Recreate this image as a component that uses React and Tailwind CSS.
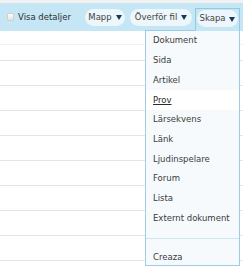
import { useState } from "react";

const items = [
  "Dokument",
  "Sida",
  "Artikel",
  "Prov",
  "Lärsekvens",
  "Länk",
  "Ljudinspelare",
  "Forum",
  "Lista",
  "Externt dokument",
];

function Caret() {
  return (
    <svg width="6" height="5" viewBox="0 0 6 5" className="ml-[4px] mt-[1px] shrink-0">
      <path d="M0 0 H6 L3 5 Z" fill="#17375e" />
    </svg>
  );
}

function Pill({ label, w }) {
  return (
    <div
      className={
        "flex items-center justify-center h-[17px] rounded-full bg-[#ecf6fb] text-[#444] whitespace-nowrap " +
        w
      }
    >
      {label}
      <Caret />
    </div>
  );
}

export default function App() {
  const [hover] = useState("Prov");

  return (
    <div
      className="relative w-[243px] h-[267px] overflow-hidden bg-white text-[8.5px] text-[#3b3b3b] whitespace-nowrap"
      style={{ fontFamily: '"DejaVu Sans", Verdana, sans-serif' }}
    >
      {/* top strip */}
      <div className="h-[3px] bg-[#f1f1f1]" />

      {/* toolbar */}
      <div className="flex items-center h-[28px] bg-[#c5e6f4] pl-[7px] pr-[3px]">
        <span className="w-[7px] h-[8px] shrink-0 rounded-[1px] border border-[#cfcfcf] bg-gradient-to-b from-white to-[#e2e2e2]" />
        <span className="ml-[4px] text-[#2e2e2e]">Visa detaljer</span>

        <div className="ml-auto flex items-center h-full">
          <Pill label="Mapp" w="w-[40px]" />
          <div className="ml-[5px]">
            <Pill label="Överför fil" w="w-[62px]" />
          </div>
          <div className="ml-[3px] self-end flex items-center h-[23px] px-[1px] pb-[3px] border border-b-0 border-[#93c8e2] bg-[#c5e6f4] relative z-10">
            <Pill label="Skapa" w="w-[41px]" />
          </div>
        </div>
      </div>

      {/* list rows */}
      <div>
        <div className="h-[14px] border-b border-[#f3f3f3]" />
        <div className="h-[16px] border-b border-[#e2e2e2]" />
        {Array.from({ length: 8 }).map((_, i) => (
          <div key={i} className="h-[25px] border-b border-[#e4e4e4]" />
        ))}
      </div>

      {/* dropdown menu */}
      <div className="absolute left-[145px] top-[30px] w-[95px] h-[236px] border border-[#9fcbe3] bg-[#f6fafd]">
        {items.map((it) => (
          <div
            key={it}
            className={
              "flex items-center h-[19.7px] pl-[7px] " +
              (it === hover ? "bg-white underline text-[#2b2b2b]" : "")
            }
          >
            {it}
          </div>
        ))}
        <div className="mt-[10px] border-t border-[#cfe4ef]" />
        <div className="flex items-center h-[20px] mt-[8px] pl-[7px]">Creaza</div>
      </div>
    </div>
  );
}
